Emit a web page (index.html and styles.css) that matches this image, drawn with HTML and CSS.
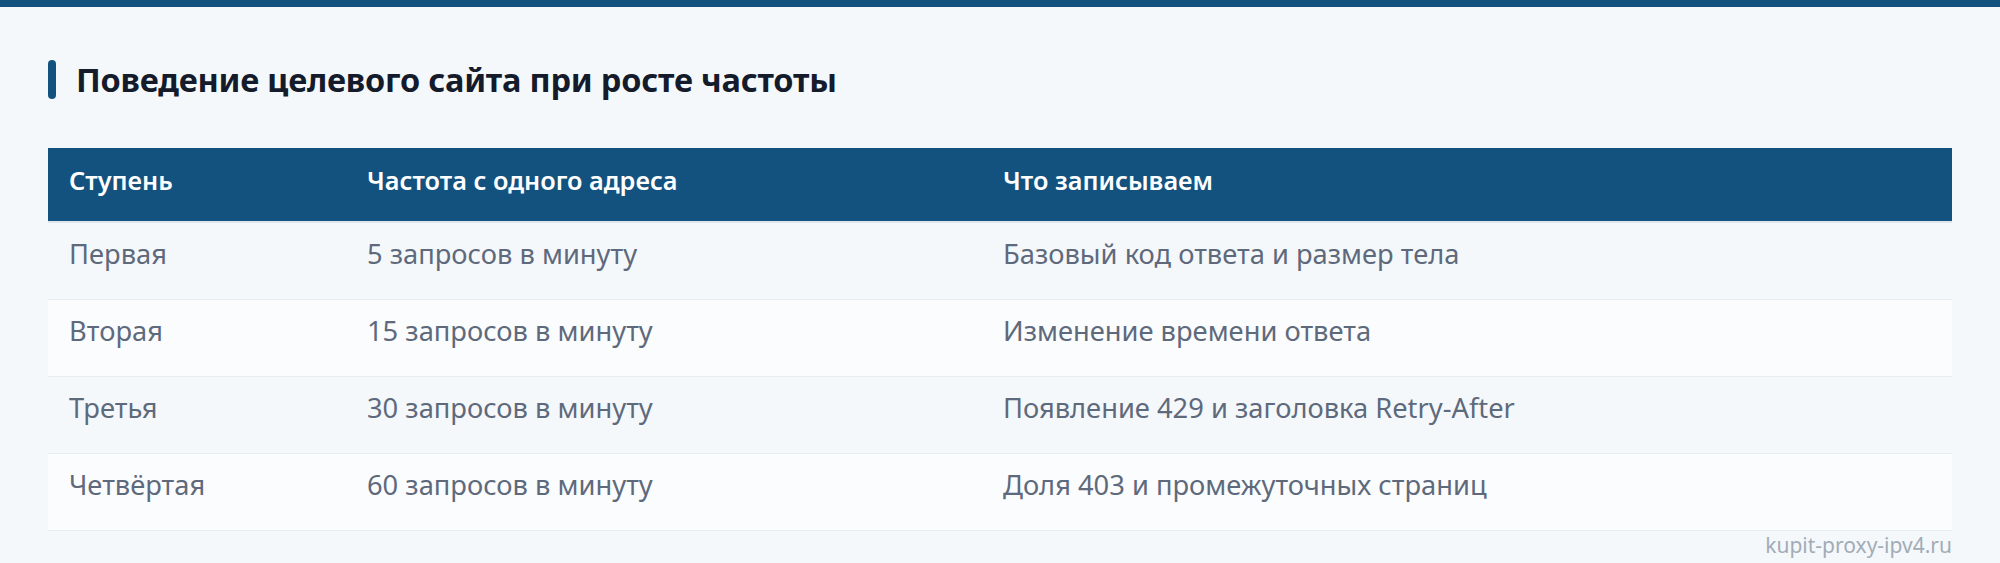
FILE: index.html
```html
<!DOCTYPE html>
<html lang="ru">
<head>
<meta charset="utf-8">
<title>Поведение целевого сайта при росте частоты</title>
<link rel="stylesheet" href="styles.css">
</head>
<body>
<div class="topbar"></div>
<main class="wrap">
  <h2 class="title">Поведение целевого сайта при росте частоты</h2>
  <table class="grid">
    <colgroup>
      <col class="c1"><col class="c2"><col class="c3">
    </colgroup>
    <thead>
      <tr><th>Ступень</th><th>Частота с одного адреса</th><th>Что записываем</th></tr>
    </thead>
    <tbody>
      <tr><td>Первая</td><td>5 запросов в минуту</td><td>Базовый код ответа и размер тела</td></tr>
      <tr><td>Вторая</td><td>15 запросов в минуту</td><td>Изменение времени ответа</td></tr>
      <tr><td>Третья</td><td>30 запросов в минуту</td><td>Появление 429 и заголовка Retry-After</td></tr>
      <tr><td>Четвёртая</td><td>60 запросов в минуту</td><td>Доля 403 и промежуточных страниц</td></tr>
    </tbody>
  </table>
  <div class="credit">kupit-proxy-ipv4.ru</div>
</main>
</body>
</html>
```

FILE: styles.css
```css
html, body {
  margin: 0;
  padding: 0;
  background: #f5f8fb;
  font-family: "Noto Sans", "Open Sans", "Liberation Sans", sans-serif;
}
.topbar {
  height: 7px;
  background: #13527f;
}
.wrap {
  padding: 53px 48px 0 48px;
}
.title {
  margin: 0 0 49px 0;
  display: flex;
  align-items: center;
  gap: 20px;
  font-size: 32.5px;
  font-weight: 700;
  color: #141b2b;
  line-height: 39px;
  letter-spacing: -0.2px;
}
.title::before {
  content: "";
  width: 8px;
  height: 39px;
  border-radius: 4px;
  background: #13527f;
  flex: none;
}
.grid {
  width: 100%;
  border-collapse: collapse;
  table-layout: fixed;
}
.c1 { width: 298px; }
.c2 { width: 636px; }
.grid th {
  background: #13527f;
  color: #ffffff;
  font-weight: 600;
  font-size: 25.3px;
  text-align: left;
  height: 74px;
  padding: 0 21px 10px;
  border-bottom: 2px solid #dfe6ee;
  box-sizing: border-box;
}
.grid td {
  font-size: 27.3px;
  color: #5e6a7c;
  height: 77px;
  padding: 0 21px 15px;
  border-bottom: 1px solid #e8edf2;
  box-sizing: border-box;
}
.grid tbody tr:nth-child(odd) td { background: #f5f8fb; }
.grid tbody tr:nth-child(even) td { background: #fbfcfe; }
.credit {
  text-align: right;
  font-size: 21px;
  color: #a2acb7;
  padding-top: 0;
}
```
